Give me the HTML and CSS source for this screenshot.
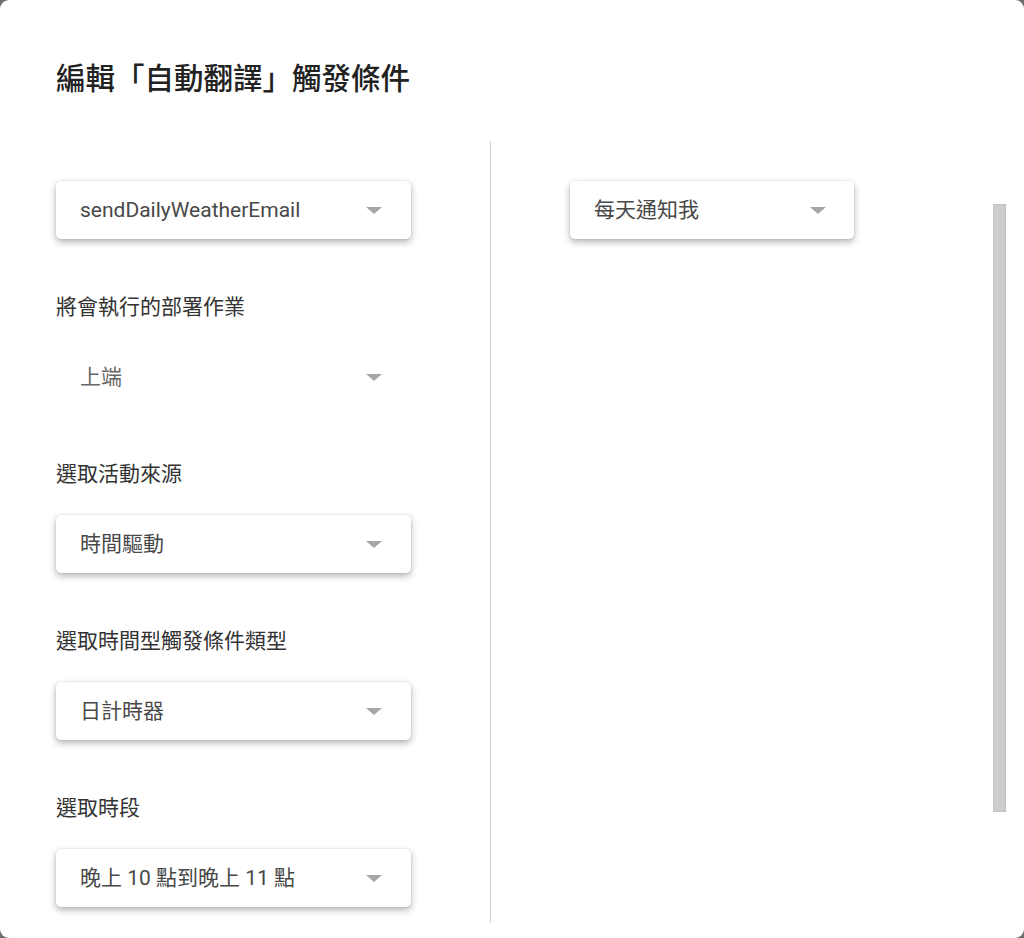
FILE: index.html
```html
<!DOCTYPE html>
<html lang="zh-Hant">
<head>
  <meta charset="UTF-8" />
  <meta name="viewport" content="width=device-width, initial-scale=1" />
  <title>編輯觸發條件</title>
  <link rel="stylesheet" href="styles.css">
</head>
<body>
  <main class="dialog" role="dialog" aria-label="編輯「自動翻譯」觸發條件">
    <h1 class="dialog-title">編輯「自動翻譯」觸發條件</h1>

    <div class="dialog-body">
      <section class="col col-left">
        <div class="select">
          <span class="select-text">sendDailyWeatherEmail</span>
          <span class="arrow"></span>
        </div>

        <div class="field">
          <label class="field-label">將會執行的部署作業</label>
          <div class="select flat">
            <span class="select-text muted">上端</span>
            <span class="arrow"></span>
          </div>
        </div>

        <div class="field">
          <label class="field-label">選取活動來源</label>
          <div class="select">
            <span class="select-text">時間驅動</span>
            <span class="arrow"></span>
          </div>
        </div>

        <div class="field">
          <label class="field-label">選取時間型觸發條件類型</label>
          <div class="select">
            <span class="select-text">日計時器</span>
            <span class="arrow"></span>
          </div>
        </div>

        <div class="field">
          <label class="field-label">選取時段</label>
          <div class="select">
            <span class="select-text">晚上 10 點到晚上 11 點</span>
            <span class="arrow"></span>
          </div>
        </div>
      </section>

      <div class="divider"></div>

      <section class="col col-right">
        <div class="select narrow">
          <span class="select-text">每天通知我</span>
          <span class="arrow"></span>
        </div>
      </section>

      <div class="scrollbar"></div>
    </div>
  </main>
</body>
</html>
```

FILE: styles.css
```css
* {
  box-sizing: border-box;
  margin: 0;
  padding: 0;
}
html, body {
  height: 100%;
}
body {
  background-color: #6f6f6f;
  font-family: Roboto, "Noto Sans CJK TC", sans-serif;
  color: #333;
  overflow: hidden;
}
.dialog {
  background-color: #fff;
  border-radius: 9px;
  height: 100%;
  padding-top: 61px;
}
.dialog-title {
  font-size: 29.5px;
  line-height: 36px;
  font-weight: 500;
  color: #222;
  padding-left: 56px;
  margin-bottom: 44px;
}
.dialog-body {
  display: flex;
  height: 782px;
}
.col {
  padding-top: 40px;
}
.col-left {
  width: 490px;
  padding-left: 56px;
  padding-right: 79px;
}
.col-right {
  flex: 1;
  padding-left: 79px;
}
.divider {
  width: 1px;
  background-color: #d0d0d0;
}
.scrollbar {
  width: 13px;
  height: 608px;
  margin-top: 63px;
  margin-right: 18px;
  background-color: #cdcdcd;
  border: 1px solid #c2c2c2;
}
.field {
  margin-top: 54px;
}
.field-label {
  display: block;
  font-size: 21px;
  line-height: 28px;
  color: #333;
  margin-bottom: 27px;
}
.select {
  display: flex;
  align-items: center;
  height: 58px;
  width: 355px;
  padding-left: 24px;
  padding-right: 29px;
  border-radius: 5px;
  background-color: #fff;
  box-shadow: 0 3px 7px rgba(0, 0, 0, 0.3), 0 0 2px rgba(0, 0, 0, 0.12);
}
.select.narrow {
  width: 284px;
  padding-right: 28px;
}
.select.flat {
  box-shadow: none;
}
.select-text {
  flex: 1;
  font-size: 21px;
  line-height: 28px;
  color: #484848;
  white-space: nowrap;
}
.select-text.muted {
  color: #666;
}
.arrow {
  width: 0;
  height: 0;
  border-left: 8px solid transparent;
  border-right: 8px solid transparent;
  border-top: 7px solid #a6a6a6;
}
```
